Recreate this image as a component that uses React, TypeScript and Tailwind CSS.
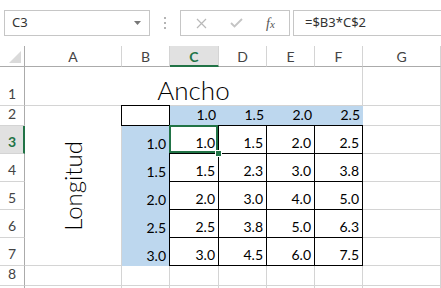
const cols = ["A", "B", "C", "D", "E", "F", "G"];
const rowVals = ["1.0", "1.5", "2.0", "2.5", "3.0"];
const table = [
  ["1.0", "1.5", "2.0", "2.5"],
  ["1.5", "2.3", "3.0", "3.8"],
  ["2.0", "3.0", "4.0", "5.0"],
  ["2.5", "3.8", "5.0", "6.3"],
  ["3.0", "4.5", "6.0", "7.5"],
];

function RowHead({ n, active = false }: { n?: number; active?: boolean }) {
  return (
    <div
      className={
        active
          ? "flex items-end justify-center border-b border-r-2 border-b-[#d4d4d4] border-r-[#217346] bg-[#e1e1e1] pb-[4px] pl-[1px] text-[14px] font-bold leading-none text-[#217346]"
          : "flex items-end justify-center border-b border-r border-b-[#d4d4d4] border-r-[#ababab] pb-[4px] text-[14px] leading-none text-[#444]"
      }
    >
      {n}
    </div>
  );
}

function Grey() {
  return <div className="border-b border-r border-[#d4d4d4]" />;
}

function Num({ v, className }: { v: string; className: string }) {
  return (
    <div className={`flex items-end justify-end pb-[3px] pr-[3px] text-[14px] leading-none text-black ${className}`}>
      {v}
    </div>
  );
}

export default function App() {
  return (
    <div className="h-[288px] w-[441px] overflow-hidden bg-white font-['Lato',sans-serif]">
      {/* formula bar */}
      <div className="flex h-[46px] items-start overflow-hidden pt-[10px] font-['Noto_Sans',sans-serif] text-[13px] text-[#333]">
        <div className="ml-[4px] flex h-[26px] w-[146px] shrink-0 items-center justify-between border border-[#c6c6c6] pl-[7px] pr-[8px]">
          <span>C3</span>
          <svg width="7" height="4" viewBox="0 0 7 4">
            <polygon points="0,0 7,0 3.5,4" fill="#777" />
          </svg>
        </div>
        <div className="flex h-[26px] w-[30px] shrink-0 flex-col items-center justify-center gap-[3px]">
          <span className="h-[2px] w-[2px] bg-[#b4b4b4]" />
          <span className="h-[2px] w-[2px] bg-[#b4b4b4]" />
          <span className="h-[2px] w-[2px] bg-[#b4b4b4]" />
        </div>
        <div className="flex h-[26px] w-[110px] shrink-0 items-center border border-[#c6c6c6]">
          <svg className="ml-[15px]" width="11" height="11" viewBox="0 0 11 11">
            <path d="M1 1L10 10M10 1L1 10" stroke="#b9b9b9" strokeWidth="1.2" fill="none" />
          </svg>
          <svg className="ml-[23px]" width="13" height="10" viewBox="0 0 13 10">
            <path d="M1 5L4.5 8.5L12 1" stroke="#c4c4c4" strokeWidth="1.8" fill="none" />
          </svg>
          <span className="ml-[23px] font-['Liberation_Serif',serif] text-[14px] italic text-[#555]">
            f<span className="text-[11px]">x</span>
          </span>
        </div>
        <div className="ml-[3px] flex h-[26px] w-[170px] shrink-0 items-center border border-[#c6c6c6] pl-[11px]">
          =$B3*C$2
        </div>
      </div>

      {/* sheet */}
      <div className="grid grid-cols-[25px_97px_48px_49px_48px_48px_48px_78px] grid-rows-[21px_39px_20px_28px_28px_28px_28px_28px_20px_20px]">
        {/* column headers */}
        <div className="relative border-b border-r border-[#ababab]">
          <svg className="absolute bottom-[3px] right-[3px]" width="12" height="12" viewBox="0 0 12 12">
            <polygon points="12,0 12,12 0,12" fill="#dadada" />
          </svg>
        </div>
        {cols.map((c) =>
          c === "C" ? (
            <div
              key={c}
              className="flex items-center justify-center border-b-2 border-r border-b-[#217346] border-r-[#d4d4d4] bg-[#e1e1e1] pt-[1px] text-[14px] font-bold text-[#217346]"
            >
              {c}
            </div>
          ) : (
            <div
              key={c}
              className="flex items-center justify-center border-b border-r border-b-[#ababab] border-r-[#d4d4d4] text-[14px] text-[#444]"
            >
              {c}
            </div>
          )
        )}

        {/* row 1 */}
        <RowHead n={1} />
        <div className="col-span-6 flex items-end justify-center border-b border-r border-[#d4d4d4] pb-[2px] text-[26px] font-light leading-none text-black">
          Ancho
        </div>
        <Grey />

        {/* row 2 */}
        <RowHead n={2} />
        <div className="row-span-6 flex items-center justify-center border-b border-r border-[#d4d4d4]">
          <span className="rotate-180 text-[24px] font-light leading-none text-black [writing-mode:vertical-rl]">
            Longitud
          </span>
        </div>
        <div className="-ml-px -mt-px border border-black" />
        {table[0].map((_, i) => (
          <Num key={i} v={table[0][i]} className="border-b border-b-black bg-[#bdd7ee]" />
        ))}
        <Grey />

        {/* rows 3-7 */}
        {rowVals.map((rv, r) => (
          <div key={rv} className="contents">
            <RowHead n={r + 3} active={r === 0} />
            <Num v={rv} className="border-r border-r-black bg-[#bdd7ee]" />
            {table[r].map((v, i) =>
              r === 0 && i === 0 ? (
                <div key={i} className="relative flex items-end justify-end border-b border-r border-black pb-[3px] pr-[3px] text-[14px] leading-none text-black">
                  {v}
                  <div className="absolute -left-px -top-px bottom-0 right-0 border-2 border-[#217346]" />
                  <div className="absolute -bottom-[4px] -right-[4px] h-[7px] w-[7px] border border-white bg-[#217346]" />
                </div>
              ) : (
                <Num key={i} v={v} className="border-b border-r border-black" />
              )
            )}
            <Grey />
          </div>
        ))}

        {/* row 8, and the top edge of row 9 */}
        {[8, 9].map((n) => (
          <div key={n} className="contents">
            <RowHead n={n === 8 ? 8 : undefined} />
            {cols.map((c) => (
              <Grey key={c} />
            ))}
          </div>
        ))}
      </div>
    </div>
  );
}
